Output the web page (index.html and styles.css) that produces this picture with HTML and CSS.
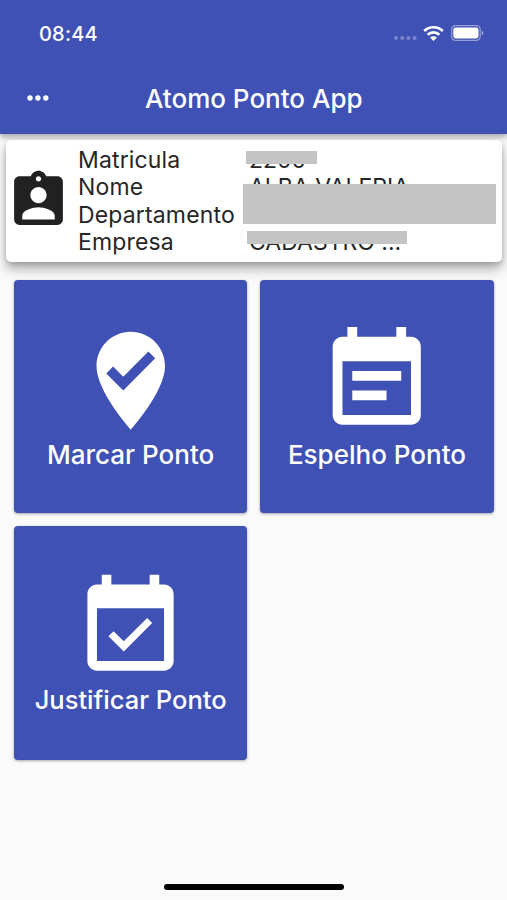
FILE: index.html
```html
<!DOCTYPE html>
<html lang="pt-BR">
<head>
    <meta charset="UTF-8">
    <meta name="viewport" content="width=device-width, initial-scale=1.0">
    <title>Atomo Ponto App</title>
    <link rel="stylesheet" href="styles.css">
</head>
<body>
    <header class="app-bar">
        <div class="status-bar">
            <span class="clock">08:44</span>
            <div class="status-icons">
                <svg class="signal" viewBox="0 0 23 4"><circle cx="2" cy="2" r="2"/><circle cx="8.2" cy="2" r="2"/><circle cx="14.4" cy="2" r="2"/><circle cx="20.6" cy="2" r="2"/></svg>
                <svg class="wifi" viewBox="0 0 21 16">
                    <path d="M1.2 6A13.4 13.4 0 0 1 19.8 6M4.7 9.7a8.3 8.3 0 0 1 11.6 0" fill="none" stroke="#fff" stroke-width="2.7"/>
                    <path d="M10.5 16L7.1 12.6a4.9 4.9 0 0 1 6.8 0z" fill="#fff"/>
                </svg>
                <svg class="battery" viewBox="0 0 33 16">
                    <rect x=".6" y=".6" width="28.6" height="14.8" rx="4" fill="none" stroke="#fff" stroke-opacity=".45" stroke-width="1.2"/>
                    <rect x="2.3" y="2.5" width="25.2" height="11" rx="2.4" fill="#fff"/>
                    <path d="M30.8 5.5c2 .8 2 4.2 0 5z" fill="#fff" fill-opacity=".5"/>
                </svg>
            </div>
        </div>
        <div class="toolbar">
            <svg class="menu" viewBox="0 0 22 6"><circle cx="3" cy="3" r="2.7"/><circle cx="10.9" cy="3" r="2.7"/><circle cx="18.8" cy="3" r="2.7"/></svg>
            <h1>Atomo Ponto App</h1>
        </div>
    </header>

    <section class="card">
        <svg class="badge" viewBox="0 0 24 24"><path d="M19 3h-4.18C14.4 1.84 13.3 1 12 1c-1.3 0-2.4.84-2.82 2H5c-1.1 0-2 .9-2 2v14c0 1.1.9 2 2 2h14c1.1 0 2-.9 2-2V5c0-1.1-.9-2-2-2zm-7 0c.55 0 1 .45 1 1s-.45 1-1 1-1-.45-1-1 .45-1 1-1zm0 4c1.66 0 3 1.34 3 3s-1.34 3-3 3-3-1.34-3-3 1.34-3 3-3zm6 12H6v-1.4c0-2 4-3.1 6-3.1s6 1.1 6 3.1V19z"/></svg>
        <div class="labels">
            <div>Matricula</div>
            <div>Nome</div>
            <div>Departamento</div>
            <div>Empresa</div>
        </div>
        <div class="values">
            <div>2200</div>
            <div>ALBA VALERIA</div>
            <div>&nbsp;</div>
            <div>CADASTRO ...</div>
            <i class="mask mask-id"></i>
            <i class="mask mask-name"></i>
            <i class="mask mask-company"></i>
        </div>
    </section>

    <main class="grid">
        <div class="tile">
            <svg viewBox="0 0 24 24"><path d="M12 2c3.86 0 7 3.14 7 7 0 5.25-7 13-7 13S5 14.25 5 9c0-3.86 3.14-7 7-7zm-1.53 12L17 7.41 15.6 6l-5.13 5.18L8.4 9.09 7 10.5l3.47 3.5z"/></svg>
            <span>Marcar Ponto</span>
        </div>
        <div class="tile">
            <svg viewBox="0 0 24 24"><path d="M19 3h-1V1h-2v2H8V1H6v2H5c-1.11 0-2 .9-2 2v14c0 1.1.89 2 2 2h14c1.1 0 2-.9 2-2V5c0-1.1-.9-2-2-2zm0 16H5V8h14v11zM17 10H7v2h10v-2zm-3 4H7v2h7v-2z"/></svg>
            <span>Espelho Ponto</span>
        </div>
        <div class="tile tile-small">
            <svg viewBox="0 0 24 24"><path d="M16.53 11.06L15.47 10l-4.88 4.88-2.12-2.12-1.06 1.06L10.59 17l5.94-5.94zM19 3h-1V1h-2v2H8V1H6v2H5c-1.11 0-1.99.9-1.99 2L3 19c0 1.1.89 2 2 2h14c1.1 0 2-.9 2-2V5c0-1.1-.9-2-2-2zm0 16H5V8h14v11z"/></svg>
            <span>Justificar Ponto</span>
        </div>
    </main>

    <div class="home-indicator"></div>
</body>
</html>
```
FILE: styles.css
```css
* {
    box-sizing: border-box;
}
body {
    margin: 0;
    height: 900px;
    overflow: hidden;
    display: flex;
    flex-direction: column;
    background: #fafafa;
    font-family: Inter, "Liberation Sans", sans-serif;
}
svg {
    display: block;
    flex: none;
}
.app-bar {
    height: 134px;
    flex: none;
    background: #3f51b5;
    color: white;
    box-shadow: 0 3px 6px rgba(0,0,0,0.35);
}
.status-bar {
    height: 62px;
    padding: 4px 24px 0 39px;
    display: flex;
    justify-content: space-between;
    align-items: center;
}
.clock {
    padding-top: 1px;
    font-size: 20px;
    font-weight: 500;
    letter-spacing: 0.2px;
}
.status-icons {
    display: flex;
    align-items: center;
}
.signal {
    width: 23px;
    height: 4px;
    margin: 10px 6px 0 0;
    fill: rgba(255,255,255,0.3);
}
.wifi {
    width: 21px;
    height: 16px;
    margin-right: 7px;
}
.battery {
    width: 33px;
    height: 16px;
    margin-right: -1px;
}
.toolbar {
    height: 72px;
    display: flex;
    align-items: center;
}
.menu {
    width: 22px;
    height: 6px;
    margin-left: 26.5px;
    fill: white;
}
h1 {
    flex: 1;
    margin: 1px 48px 0 0;
    text-align: center;
    font-size: 26px;
    font-weight: 500;
    line-height: 32px;
}
.card {
    height: 122px;
    flex: none;
    margin: 6px 5.5px 0 6px;
    padding-top: 7px;
    display: flex;
    background: white;
    border-radius: 5px;
    box-shadow: 0 7px 12px rgba(0,0,0,0.3), 0 2px 5px rgba(0,0,0,0.15);
    font-size: 23px;
    line-height: 27.3px;
    color: #262626;
}
.badge {
    width: 65px;
    height: 65px;
    margin-top: 21px;
    fill: #212121;
}
.labels {
    width: 169px;
    padding-left: 7px;
    letter-spacing: 0.15px;
}
.values {
    position: relative;
    flex: 1;
    padding-left: 9px;
    white-space: nowrap;
}
/* grey bars hiding the personal data */
.mask {
    position: absolute;
    background: #c4c4c4;
}
.mask-id {
    left: 6px;
    top: 4px;
    width: 71px;
    height: 13px;
}
.mask-name {
    left: 3px;
    top: 37px;
    width: 253px;
    height: 40px;
}
.mask-company {
    left: 7px;
    top: 84px;
    width: 160px;
    height: 13px;
}
.grid {
    padding: 18px 13px 0 14px;
    display: grid;
    grid-template-columns: 233.3px 233.3px;
    grid-auto-rows: 233.3px;
    gap: 13px;
}
.tile {
    padding-top: 42px;
    display: flex;
    flex-direction: column;
    align-items: center;
    background: #3f51b5;
    border-radius: 4px;
    box-shadow: 0 1px 3px rgba(0,0,0,0.35);
    color: white;
    font-size: 26px;
    font-weight: 500;
    line-height: 32px;
    white-space: nowrap;
}
.tile svg {
    width: 117.5px;
    height: 117.5px;
    margin-bottom: -0.7px;
    fill: white;
}
.tile-small {
    padding-top: 44px;
    font-size: 25.5px;
}
.tile-small svg {
    width: 115px;
    height: 115px;
    margin-bottom: -1.3px;
}
.home-indicator {
    width: 180px;
    height: 6px;
    margin: auto auto 10.5px 164px;
    flex: none;
    background: black;
    border-radius: 3px;
}
```
